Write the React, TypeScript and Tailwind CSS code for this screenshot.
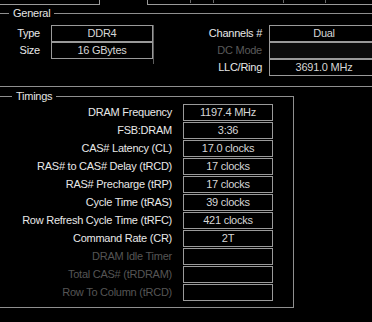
import React from "react";

interface IRow {
  label: string;
  value: string;
  dim?: boolean;
}

const timings: IRow[] = [
  { label: "DRAM Frequency", value: "1197.4 MHz" },
  { label: "FSB:DRAM", value: "3:36" },
  { label: "CAS# Latency (CL)", value: "17.0 clocks" },
  { label: "RAS# to CAS# Delay (tRCD)", value: "17 clocks" },
  { label: "RAS# Precharge (tRP)", value: "17 clocks" },
  { label: "Cycle Time (tRAS)", value: "39 clocks" },
  { label: "Row Refresh Cycle Time (tRFC)", value: "421 clocks" },
  { label: "Command Rate (CR)", value: "2T" },
  { label: "DRAM Idle Timer", value: "", dim: true },
  { label: "Total CAS# (tRDRAM)", value: "", dim: true },
  { label: "Row To Column (tRCD)", value: "", dim: true },
];

const Field = ({ value, className }: { value: string; className: string }) => (
  <div
    className={
      "h-[17px] border border-[#9a9a9a] text-center leading-[15px] text-[#d6d6d6] " +
      className
    }
  >
    {value}
  </div>
);

const App = () => {
  return (
    <div className="w-[372px] h-[322px] overflow-hidden bg-black font-['Liberation_Sans',Arial,sans-serif] text-[11px] leading-[15px] tracking-[-0.25px] text-[#e8e8e8]">
      {/* tab strip edge */}
      <div className="flex h-[5px]">
        <div className="w-[100px] border-b border-r border-[#9a9a9a]" />
        <div className="w-[47px]" />
        <div className="flex flex-1 border-b border-l border-[#9a9a9a]">
          <div className="w-[43px] h-[3px] border-r border-[#6a6a6a]" />
          <div className="w-[23px] h-[3px] border-r border-[#6a6a6a]" />
          <div className="w-[70px] h-[3px] border-r border-[#6a6a6a]" />
          <div className="w-[42px] h-[3px] border-r border-[#6a6a6a]" />
        </div>
      </div>

      {/* General */}
      <div className="relative mt-[8px] h-[74px] border-y border-[#8f8f8f] pt-[11px]">
        <span className="absolute left-[9px] top-[-8px] bg-black px-[4px] text-[#e4e4e4]">
          General
        </span>
        <div className="flex">
          <div className="flex w-[153px] shrink-0 flex-col">
            <div className="flex items-center">
              <span className="w-[40px] text-right">Type</span>
              <Field value="DDR4" className="ml-[11px] w-[102px]" />
            </div>
            <div className="flex items-center">
              <span className="w-[40px] text-right">Size</span>
              <Field value="16 GBytes" className="ml-[11px] w-[102px]" />
            </div>
          </div>
          <div className="h-[39px] w-[5px] border-r border-[#5c5c5c]" />
          <div className="flex flex-1 flex-col">
            <div className="flex items-center">
              <span className="w-[108px] text-right">Channels #</span>
              <Field value="Dual" className="ml-[7px] w-[110px]" />
            </div>
            <div className="flex items-center">
              <span className="w-[108px] text-right text-[#5a5a5a]">DC Mode</span>
              <Field value="" className="ml-[7px] w-[110px] border-[#6e6e6e] bg-[#0c0c0c]" />
            </div>
            <div className="flex items-center">
              <span className="w-[108px] text-right">LLC/Ring</span>
              <Field value="3691.0 MHz" className="ml-[7px] w-[110px]" />
            </div>
          </div>
        </div>
      </div>

      {/* Timings */}
      <div className="relative mt-[9px] h-[212px] w-[294px] border-y border-r border-[#8f8f8f] pt-[7px]">
        <span className="absolute left-[12px] top-[-8px] bg-black px-[4px] text-[#e4e4e4]">
          Timings
        </span>
        <div className="flex flex-col gap-[1px]">
          {timings.map((row) => (
            <div key={row.label} className="flex items-center">
              <span
                className={
                  row.dim
                    ? "w-[172px] text-right text-[#555555]"
                    : "w-[172px] text-right"
                }
              >
                {row.label}
              </span>
              <Field value={row.value} className="ml-[11px] w-[90px]" />
            </div>
          ))}
        </div>
      </div>
    </div>
  );
};

export default App;
